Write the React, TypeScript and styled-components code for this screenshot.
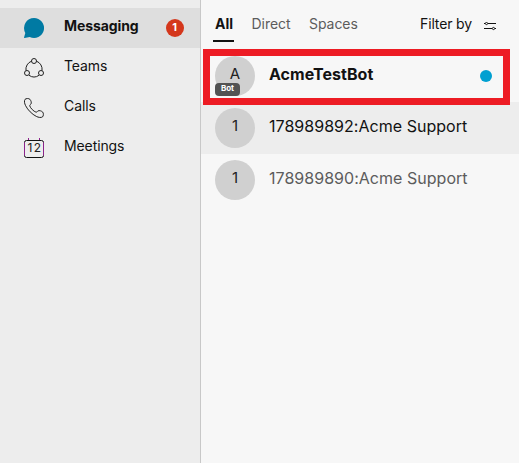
import React from 'react';
import styled, { createGlobalStyle } from 'styled-components';

const GlobalStyle = createGlobalStyle`
  * { box-sizing: border-box; }
  body { margin: 0; font-family: Inter, Roboto, "Liberation Sans", sans-serif; color: #121212; }
`;

const Shell = styled.div`
  display: flex;
  width: 519px;
  height: 463px;
  overflow: hidden;
  background: #f7f7f7;
`;

const Sidebar = styled.nav`
  width: 201px;
  flex: none;
  padding-top: 8px;
  background: #ededed;
  border-right: 1px solid #c8c8c8;
`;

const NavItem = styled.div<{ $active?: boolean }>`
  display: flex;
  align-items: center;
  height: 40px;
  padding: 0 16px 0 24px;
  font-size: 14px;
  font-weight: ${(p) => (p.$active ? 700 : 400)};
  letter-spacing: -0.1px;
  background: ${(p) => (p.$active ? '#dedede' : 'transparent')};
  svg { flex: none; }
`;

const NavLabel = styled.span`
  flex: 1;
  margin-left: 20px;
  padding-bottom: 4px;
  line-height: 20px;
`;

const Count = styled.span`
  display: flex;
  align-items: center;
  justify-content: center;
  width: 18px;
  height: 18px;
  padding: 0 1px 2px 0;
  border-radius: 50%;
  background: #d4371c;
  color: #fff;
  font-size: 11px;
  font-weight: 700;
`;

const CalendarText = styled.text`
  font-size: 12px;
  font-weight: 400;
  letter-spacing: 0;
  fill: #222;
`;

const Main = styled.main`
  flex: 1;
  min-width: 0;
`;

const Toolbar = styled.header`
  display: flex;
  align-items: flex-start;
  height: 50px;
  padding: 12px 23px 0 12px;
`;

const Tab = styled.div<{ $active?: boolean }>`
  height: 30px;
  margin-right: ${(p) => (p.$active ? 17.5 : 18.5)}px;
  padding: ${(p) => (p.$active ? '0 2px' : '0')};
  width: ${(p) => (p.$active ? '21px' : 'auto')};
  border-bottom: 2px solid ${(p) => (p.$active ? '#121212' : 'transparent')};
  color: ${(p) => (p.$active ? '#121212' : '#5c5c5c')};
  font-size: 14px;
  font-weight: ${(p) => (p.$active ? 700 : 400)};
  line-height: 24px;
  letter-spacing: -0.05px;
`;

const Filter = styled.div`
  display: flex;
  align-items: flex-start;
  gap: 12px;
  margin-left: auto;
  font-size: 14px;
  line-height: 24px;
  letter-spacing: -0.14px;
  svg { margin-top: 10px; }
`;

const Conversation = styled.div<{ $shade?: boolean; $muted?: boolean; $bold?: boolean }>`
  position: relative;
  display: flex;
  align-items: center;
  height: 52px;
  padding: 0 27px 0 14px;
  background: ${(p) => (p.$shade ? '#ededed' : '#f7f7f7')};
  color: ${(p) => (p.$muted ? '#5c5c5c' : '#121212')};
  font-size: 16px;
  font-weight: ${(p) => (p.$bold ? 700 : 400)};
`;

const Avatar = styled.div`
  position: relative;
  display: flex;
  align-items: center;
  justify-content: center;
  flex: none;
  width: 40px;
  height: 40px;
  padding-bottom: 5px;
  border-radius: 50%;
  background: #d0d0d0;
  color: #222;
  font-size: 15px;
  font-weight: 400;
`;

const BotTag = styled.span`
  position: absolute;
  left: 0;
  bottom: 0;
  width: 25px;
  height: 13px;
  border-radius: 4px;
  background: #535353;
  color: #fff;
  font-size: 8px;
  font-weight: 700;
  line-height: 11px;
  text-align: center;
`;

const Name = styled.span`
  flex: 1;
  margin-left: 14px;
  padding-bottom: 5px;
  line-height: 20px;
  white-space: nowrap;
  letter-spacing: 0.03px;
`;

const Unread = styled.span`
  width: 12px;
  height: 12px;
  border-radius: 50%;
  background: #00a0d1;
`;

const Highlight = styled.div`
  position: absolute;
  z-index: 1;
  top: -1px;
  left: 2px;
  width: 307px;
  height: 56px;
  border: 7px solid #ed1c24;
`;

const ChatIcon = () => (
  <svg width="20" height="20" viewBox="0 0 20 20" fill="#007aa3">
    <path d="M10 0a10 10 0 1 1-4.3 19L.6 20c-.5.1-.7-.3-.5-.7l1.2-4.4A10 10 0 0 1 10 0Z" />
  </svg>
);

const TeamsIcon = () => (
  <svg width="20" height="20" viewBox="0 0 20 20" fill="none" stroke="#222">
    <circle cx="10" cy="3" r="2.5" />
    <circle cx="3" cy="15" r="2.5" />
    <circle cx="17" cy="15" r="2.5" />
    <path d="M7.5 3.2A8.6 8.6 0 0 0 2 12.6M12.5 3.2A8.6 8.6 0 0 1 18 12.6M5 17.3a8.7 8.7 0 0 0 10 0" />
  </svg>
);

const PhoneIcon = () => (
  <svg width="20" height="20" viewBox="0 0 20 20" fill="none" stroke="#222" strokeLinejoin="round">
    <path d="M1 1.4C2 .3 4.8.2 5.9 1.3c1.1 1.2 1.8 3.5 1.1 4.6-.5.8-1.5 1-1.2 2.1.5 2 4.1 5.6 6.1 6.1 1 .3 1.3-.7 2.1-1.2 1.2-.7 3.5 0 4.7 1.2 1 1 .9 3.9-.2 4.8-1.3 1-4 .6-6.2-.5C8 16.2 3.8 12 1.6 7.7.5 5.5 0 2.8 1 1.4Z" />
  </svg>
);

const CalendarIcon = () => (
  <svg width="20" height="20" viewBox="0 0 20 20" fill="none">
    <path d="M2.5 2.5h15a2 2 0 0 1 2 2v13a2 2 0 0 1-2 2h-15a2 2 0 0 1-2-2v-13a2 2 0 0 1 2-2Z" stroke="#121212" />
    <path d="M.5 4.5v13M19.5 4.5v13M4.5 0v2M15.5 0v2" stroke="#8c238c" />
    <CalendarText x="3.5" y="14" textLength="13.5">12</CalendarText>
  </svg>
);

const FilterIcon = () => (
  <svg width="12" height="9" viewBox="0 0 12 9" fill="none" stroke="#121212">
    <path d="M0 1.5h1M4 1.5h8M0 6.5h8M11 6.5h1" />
    <circle cx="2.5" cy="1.5" r="1.1" />
    <circle cx="9.5" cy="6.5" r="1.1" />
  </svg>
);

export default function App() {
  return (
    <>
      <GlobalStyle />
      <Shell>
        <Sidebar>
          <NavItem $active>
            <ChatIcon />
            <NavLabel>Messaging</NavLabel>
            <Count>1</Count>
          </NavItem>
          <NavItem>
            <TeamsIcon />
            <NavLabel>Teams</NavLabel>
          </NavItem>
          <NavItem>
            <PhoneIcon />
            <NavLabel>Calls</NavLabel>
          </NavItem>
          <NavItem>
            <CalendarIcon />
            <NavLabel>Meetings</NavLabel>
          </NavItem>
        </Sidebar>
        <Main>
          <Toolbar>
            <Tab $active>All</Tab>
            <Tab>Direct</Tab>
            <Tab>Spaces</Tab>
            <Filter>
              Filter by
              <FilterIcon />
            </Filter>
          </Toolbar>
          <Conversation $bold>
            <Avatar>
              A<BotTag>Bot</BotTag>
            </Avatar>
            <Name>AcmeTestBot</Name>
            <Unread />
            <Highlight />
          </Conversation>
          <Conversation $shade>
            <Avatar>1</Avatar>
            <Name>178989892:Acme Support</Name>
          </Conversation>
          <Conversation $muted>
            <Avatar>1</Avatar>
            <Name>178989890:Acme Support</Name>
          </Conversation>
        </Main>
      </Shell>
    </>
  );
}
